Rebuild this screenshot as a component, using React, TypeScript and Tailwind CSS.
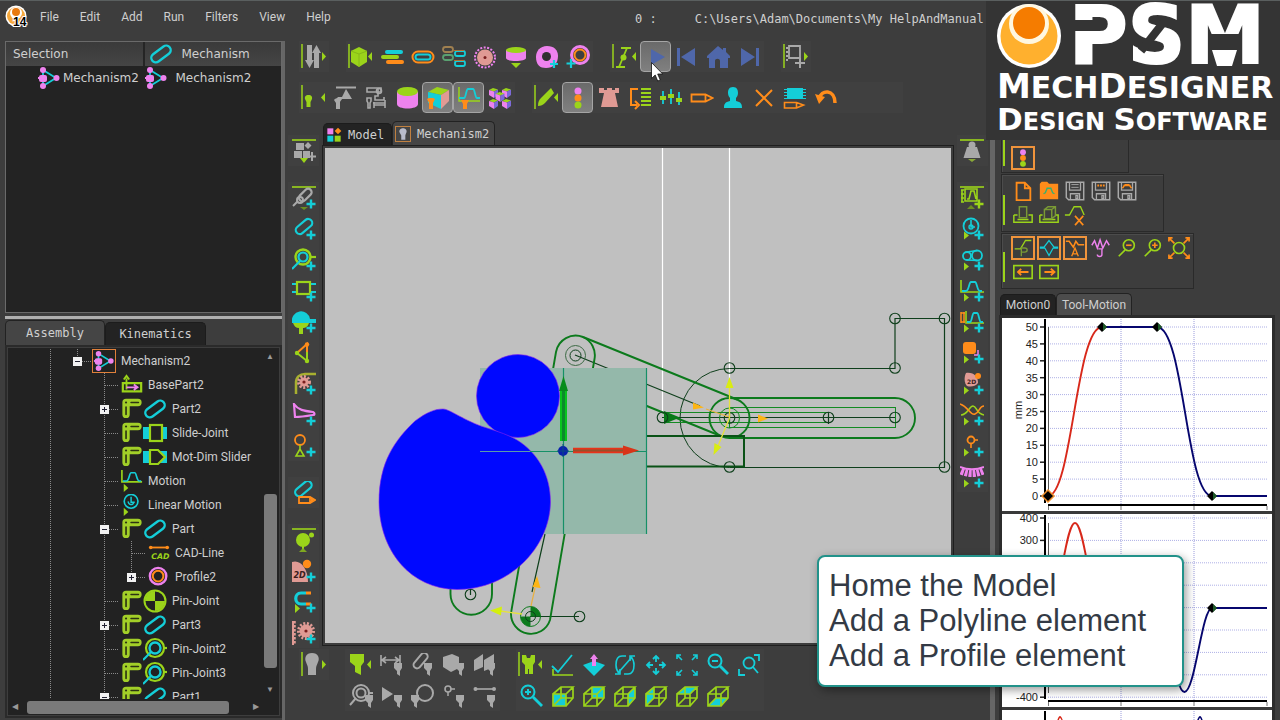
import type { ReactNode } from "react";

const L = "#9bd41a";
const C = "#14ced8";
const O = "#ff8c1a";
const V = "#ee82ee";
const S = "#e09a94";
const G = "#a9a9a9";
const B = "#4f67aa";

const plus = <path d="M19 13.5v9M14.5 18h9" stroke={C} strokeWidth="2.4" />;
const run = <path d="M4 14.5l5 4-5 4z" fill={L} />;
const funnel = (x: number, y: number, color: string) => (
  <path transform={`translate(${x} ${y})`} d="M0 0h8v5l-2 3v5l-3-2V8L0 5z" fill={color} />
);
const slot = (color: string) => (
  <rect x="2.5" y="5.5" width="19" height="8" rx="4" transform="rotate(-40 12 9.5)" stroke={color} strokeWidth="2.2" />
);
const cubeFrame = (face: ReactNode) => (
  <>
    {face}
    <path d="M2 10h13v12H2zM2 10l8-7h12l-7 7M22 3v11l-7 8M10 3v11h12M10 14l-8 8" stroke={L} strokeWidth="1.7" />
  </>
);
const floppy = (mark: ReactNode) => (
  <>
    <path d="M2.5 2.5h19v19H5l-2.500-2.500z" stroke={G} strokeWidth="1.6" />
    <path d="M6 3v8h12V3M7 21v-6h10v6M13 17h2v3h-2z" stroke={G} strokeWidth="1.4" />
    {mark}
  </>
);
const gear = (cx: number, cy: number, r: number) => (
  <>
    <circle cx={cx} cy={cy} r={r} stroke={S} strokeWidth="3" strokeDasharray="2 1.6" />
    <circle cx={cx} cy={cy} r={r - 1} fill={S} />
    <circle cx={cx} cy={cy} r="1.6" fill="#7a1f1f" />
  </>
);
const miniCube = (x: number, y: number) => (
  <g transform={`translate(${x} ${y})`}>
    <path d="M0 2l4-2 5 1.500-4 2z" fill={L} />
    <path d="M0 2l5 1.500V10L0 7z" fill={V} />
    <path d="M9 1.500L5 3.500V10l4-3z" fill="#7d6ad8" />
  </g>
);
const mech = (
  <>
    <path d="M6 4v16M6 4l13 8-13 8" stroke={C} strokeWidth="1.8" />
    <path d="M1 12h6" stroke={V} strokeWidth="2" />
    <circle cx="6" cy="4" r="3" fill={V} />
    <circle cx="6" cy="20" r="3" fill={V} />
    <rect x="2" y="9" width="8" height="7" rx="2" fill={V} />
    <circle cx="19.500" cy="12" r="3" fill={V} />
  </>
);
const motion = (
  <path d="M2 12h4c3 0 3-9 5-9h4c2 0 2 9 5 9h2" stroke={C} strokeWidth="1.8" />
);

const icons: Record<string, ReactNode> = {
  bars: (
    <g strokeWidth="4" strokeLinecap="round">
      <path d="M7 7h14" stroke={C} />
      <path d="M3 12h14" stroke={L} />
      <path d="M8 17h14" stroke={O} />
    </g>
  ),
  slotOutline: (
    <>
      <rect x="1.500" y="6.500" width="21" height="11" rx="5.500" stroke={O} strokeWidth="2" />
      <rect x="4.500" y="9.500" width="15" height="5" rx="2.500" stroke={C} strokeWidth="2" />
    </>
  ),
  slots: (
    <g strokeWidth="1.800">
      <rect x="1" y="2" width="10" height="5" rx="2.500" stroke="#a08050" />
      <rect x="13" y="6" width="10" height="5" rx="2" stroke={C} />
      <rect x="1" y="10" width="10" height="5" rx="2.500" stroke="#5aa070" />
      <rect x="13" y="16" width="10" height="5" rx="2" stroke={C} />
      <path d="M12 5.500h10M12 15.500h10" stroke="#b07030" strokeWidth="1" />
    </g>
  ),
  gear: (
    <>
      <circle cx="12" cy="12.500" r="10" stroke={V} strokeWidth="2" strokeDasharray="2 1.500" />
      <circle cx="12" cy="12.500" r="8" fill={S} />
      <circle cx="12" cy="12.500" r="1.500" fill="#7a1f1f" />
    </>
  ),
  extrude: (
    <>
      <path d="M2 5v8c0 4 20 4 20 0V5z" fill={V} />
      <ellipse cx="12" cy="5" rx="10" ry="3" fill={L} />
      <path d="M7 18h10l-5 5z" fill={L} />
    </>
  ),
  camAdd: (
    <>
      <path d="M12 1c7 0 11 4 11 10 0 8-5 12-12 12C5 23 1 20 1 12 1 6 5 1 12 1z" fill={V} />
      <circle cx="11.500" cy="11.500" r="4.500" fill="#303030" />
      <path d="M19 15v8M15 19h8" stroke={C} strokeWidth="2.200" />
    </>
  ),
  profileAdd: (
    <>
      <circle cx="14" cy="10" r="8.500" stroke={V} strokeWidth="3" />
      <circle cx="14" cy="10" r="5.500" stroke={O} strokeWidth="2" />
      <path d="M5 14v9M.5 18.500h9" stroke={C} strokeWidth="2.200" />
    </>
  ),
  play: <path d="M7 4l14 8-14 8z" fill={B} />,
  first: <path d="M2 3h3v18H2zM20 3v18L6 12z" fill={B} />,
  home: <path d="M12 1L1 11v2h2v10h6v-7c0-3 5-3 5 0v7h8V13h2v-2l-4-4V3h-3v2z" fill={B} />,
  last: <path d="M19 3h3v18h-3zM4 3v18l14-9z" fill={B} />,
  support: (
    <>
      <path d="M3 1.500h20" stroke={G} strokeWidth="2" />
      <path d="M13 3l6 10H8z" fill={G} />
      <path d="M1 14c1-2 3-1 4-3h4c1 2-1 3-2 5v7H3v-6z" fill={G} />
    </>
  ),
  linkage: (
    <g stroke={G} strokeWidth="1.600">
      <path d="M3 2h14v4H3zM14 2v8h-3v4h9v-3M9 17h12v-3M10 22v-6M21 22v-6M10 19h11" />
      <circle cx="15" cy="5" r="2.500" />
      <path d="M3 12h4v3l-1 2v5H4v-5l-1-2z" />
    </g>
  ),
  cylinder: (
    <>
      <path d="M2 6v12c0 6 21 6 21 0V6z" fill={V} />
      <ellipse cx="12.500" cy="5.500" rx="10.500" ry="4.500" fill={L} />
    </>
  ),
  cube: (
    <>
      <path d="M2 6l9-5 12 3-8 5z" fill={L} />
      <path d="M2 6l13 3v14L2 17z" fill={C} />
      <path d="M23 4l-8 5v14l8-8z" fill={S} />
      <path d="M1 13l2-1h4l2 1-2 4v6H3v-6z" fill={O} />
    </>
  ),
  motionBulb: (
    <>
      <path d="M2 1v14h21" stroke={L} strokeWidth="1.500" />
      <path d="M2 12h5c2 0 2-9 4-9h5c2 0 2 9 4 9h3" stroke={C} strokeWidth="1.800" />
      <path d="M4 14h8l-2 4v5H6v-5z" fill={O} />
    </>
  ),
  cubes: (
    <>
      {miniCube(1, 2)}
      {miniCube(14, 2)}
      {miniCube(7.5, 6)}
      {miniCube(1, 13)}
      {miniCube(14, 13)}
    </>
  ),
  lights: (
    <>
      <circle cx="12" cy="5" r="3.500" fill={V} />
      <circle cx="12" cy="12" r="3.500" fill={O} />
      <circle cx="12" cy="19" r="3.500" fill={L} />
    </>
  ),
  rook: <path d="M2 2h5v2h3V2h5v2h3V2h4v5h-4l3 14H4L7 7H2z" fill={S} />,
  order: (
    <>
      <path d="M10 3H3v16h6M7 15l4 4-4 4" stroke={O} strokeWidth="2" />
      <path d="M13 3h10M13 7h10M13 11h10M13 15h10M13 19h10" stroke={L} strokeWidth="2" />
    </>
  ),
  sliders: (
    <>
      <path d="M4 5v13M12 3v15M20 6v13" stroke={C} strokeWidth="1.800" />
      <path d="M1 10h6v4H1zM9 8h6v4H9zM17 12h6v4h-6z" fill={L} />
    </>
  ),
  pencil: <path d="M1.500 8.500h14l7 3.500-7 3.500h-14zM15.500 8.500v7" stroke={O} strokeWidth="1.800" />,
  person: <path d="M12 1c4 0 5 3 5 6 0 2-1 4-2 5v3c5 1 6 3 6 7H3c0-4 1-6 6-7v-3c-1-1-2-3-2-5 0-3 1-6 5-6z" fill={C} />,
  cross: <path d="M4 4l16 16M20 4L4 20" stroke={O} strokeWidth="2" />,
  chipPencil: (
    <>
      <rect x="4" y="2" width="16" height="11" fill={C} />
      <path d="M1 3.500h22M1 6.500h22M1 9.500h22M1 12.500h22" stroke={C} strokeWidth="1.200" />
      <path d="M1.500 16.500h12l7 2.500-7 3h-12zM13.500 16.500v5" stroke={O} strokeWidth="1.600" />
    </>
  ),
  undo: (
    <>
      <path d="M5 13C7 3 21 3 21 17" stroke={O} strokeWidth="3.500" />
      <path d="M1 8l10 3-6 7z" fill={O} />
    </>
  ),
  stripBlocks: (
    <>
      <path d="M0 1h24" stroke={L} strokeWidth="1.600" />
      <path d="M4 4h8v7H4zM2 12h8v7H2zM11 12h7v7h-7zM16 3l3.500 3.500L16 10l-3.500-3.500z" fill={G} />
      <path d="M20 13v9M16 17.500h8" stroke={G} strokeWidth="2" />
      <path d="M8 19h8l-4 5z" fill={L} />
    </>
  ),
  stripPart: (
    <>
      <path d="M0 1h24" stroke={L} strokeWidth="1.600" />
      <rect x="6" y="5" width="15" height="7" rx="3.500" transform="rotate(-45 14 9)" stroke={G} strokeWidth="2.200" />
      <circle cx="8" cy="14" r="3" stroke={G} strokeWidth="2" />
      <path d="M1 20l5-5" stroke={G} strokeWidth="2" />
      {plus}
      <path d="M8 21h8l-4 3z" fill="#6c8f20" />
    </>
  ),
  partAdd: (
    <>
      {slot(C)}
      {plus}
    </>
  ),
  pinAdd: (
    <>
      <circle cx="11" cy="9" r="7.500" stroke={L} strokeWidth="2.400" />
      <circle cx="11" cy="9" r="4.500" stroke={C} strokeWidth="2.200" />
      <path d="M0 21l8-8" stroke={C} strokeWidth="2.200" />
      <path d="M18 9h6" stroke={L} strokeWidth="2.200" />
      {plus}
    </>
  ),
  slideAdd: (
    <>
      <path d="M0 5h24M0 13h24" stroke={C} strokeWidth="2.200" />
      <rect x="5" y="3" width="13" height="12" fill="#3d3d3d" stroke={L} strokeWidth="2.200" />
      {plus}
    </>
  ),
  ballAdd: (
    <>
      <path d="M0 12a9 9 0 0118-3h6v4H0z" fill={C} />
      <path d="M1 13h16c-1 4-4 5-6 5v6H7v-6c-3 0-5-2-6-5z" fill={L} />
      {plus}
    </>
  ),
  triad: (
    <>
      <path d="M5 12L15 3v8" stroke={O} strokeWidth="2" />
      <path d="M5 12l10 8v-9" stroke={L} strokeWidth="2" />
      <circle cx="15" cy="3.500" r="2.200" fill={O} />
      <circle cx="5" cy="12" r="2.200" fill={L} />
      <circle cx="15" cy="20" r="2.200" fill={L} />
    </>
  ),
  beltAdd: (
    <>
      <path d="M4 22V11c0-6 4-9 9-9h11" stroke="#a8b030" strokeWidth="2.500" />
      {gear(12, 10, 5.5)}
      {plus}
    </>
  ),
  camCurve: (
    <>
      <path d="M2 1c4 6 10 7 19 8 2 1 2 3 0 3-6 1-13 2-18 2z" stroke={V} strokeWidth="2.200" />
      {plus}
    </>
  ),
  lollyAdd: (
    <>
      <circle cx="8" cy="6" r="5" stroke={O} strokeWidth="1.800" />
      <path d="M8 11v4M8 15l-4 7h8z" stroke={L} strokeWidth="1.600" />
      {plus}
    </>
  ),
  partEdit: (
    <>
      <rect x="2" y="4" width="19" height="8" rx="4" transform="rotate(-40 11 8)" stroke={C} strokeWidth="2.200" />
      <path d="M7 16h11l5 3-5 3H7zM18 16v6" stroke={O} strokeWidth="1.800" />
      <path d="M19 17l4 2-4 2z" fill={O} />
    </>
  ),
  stripBall: (
    <>
      <path d="M0 1h24" stroke={L} strokeWidth="1.600" />
      <circle cx="11" cy="12" r="7" fill={L} />
      <circle cx="19.500" cy="7" r="2.500" fill={L} />
      <path d="M11 18v3" stroke={L} strokeWidth="2" />
      <path d="M7 24l4-4 4 4z" fill="#7fa820" />
    </>
  ),
  camTwoD: (
    <>
      <path d="M0 23V3c8-3 16 6 16 20z" fill={S} />
      <circle cx="15" cy="5" r="4.200" fill={O} />
      <text x="1.500" y="19" fontSize="8" fontWeight="700" fontStyle="italic" fontFamily="DejaVu Sans, sans-serif" fill="#3a2020">2D</text>
      {plus}
    </>
  ),
  magnet: (
    <>
      <path d="M14 3H9C2 3 2 14 9 14h5" stroke={C} strokeWidth="3.200" />
      <path d="M14 3h5M14 14h5" stroke={O} strokeWidth="3.200" />
      <path d="M3 14l5 4.500L3 23z" fill={L} />
      {plus}
    </>
  ),
  rackAdd: (
    <>
      <path d="M2 0v24" stroke={S} strokeWidth="3.500" strokeDasharray="2.500 1.500" />
      <path d="M1 0v24" stroke={S} strokeWidth="2" />
      {gear(14, 10, 7.5)}
      {plus}
    </>
  ),
  weight: (
    <>
      <path d="M0 1h24" stroke={L} strokeWidth="1.600" />
      <circle cx="12" cy="6" r="3.500" fill={G} />
      <path d="M7 8h10l3.500 11h-17z" fill={G} />
      <path d="M8 20h8l-4 3z" fill="#8aa838" />
    </>
  ),
  stripMotion: (
    <>
      <path d="M0 1h24" stroke={L} strokeWidth="1.600" />
      <path d="M5 3h12v12H5zM7 13h2l2-8h3l2 8M2 4v12M1 4h3M1 8h3M1 12h3M1 16h3" stroke={L} strokeWidth="1.600" />
      <path d="M19 13.500v9M14.500 18h9" stroke={L} strokeWidth="2.400" />
      <path d="M7 23l4-4 4 4z" fill="#6c8f20" />
    </>
  ),
  clockAdd: (
    <>
      <circle cx="11" cy="9" r="7.500" stroke={C} strokeWidth="1.800" />
      <path d="M11 3v7h4" stroke={C} strokeWidth="1.600" />
      <circle cx="11" cy="10" r="2" stroke={C} strokeWidth="1.400" />
      {run}
      {plus}
    </>
  ),
  pulleyAdd: (
    <>
      <circle cx="7" cy="8" r="4" stroke={C} strokeWidth="1.800" />
      <circle cx="17" cy="7.500" r="5" stroke={C} strokeWidth="1.800" />
      <path d="M7 4l10-1.500M7 12l10 .5" stroke={C} strokeWidth="1.500" />
      {run}
      {plus}
    </>
  ),
  motionAdd: (
    <>
      <path d="M1 1v12h23" stroke={L} strokeWidth="1.600" />
      {motion}
      {run}
      {plus}
    </>
  ),
  motionFile: (
    <>
      <path d="M1 2v11M4 2v11M1 3h4M1 12h4" stroke={O} strokeWidth="1.500" />
      <path d="M6 1v12h18" stroke={L} strokeWidth="1.600" />
      <path d="M7 12h3c2 0 2-9 4-9h3c2 0 2 9 4 9h2" stroke={C} strokeWidth="1.800" />
      {run}
      {plus}
    </>
  ),
  blockAdd: (
    <>
      <rect x="3" y="1" width="13" height="12" rx="3" fill={O} />
      <path d="M18 9v5h-4" stroke={V} strokeWidth="1.500" />
      {run}
      {plus}
    </>
  ),
  camData: (
    <>
      <path d="M6 1c8-1 12 4 12 10-3 4-8 4-11 3-3-3-3-9-1-13z" fill={S} />
      <circle cx="18" cy="4" r="3" fill={O} />
      <text x="7" y="12" fontSize="6" fontWeight="700" fontFamily="DejaVu Sans, sans-serif" fill="#3a2020">2D</text>
      {run}
      {plus}
    </>
  ),
  curvesAdd: (
    <>
      <path d="M1 12c7 0 8-9 12-9s3 8 11 9" stroke={L} strokeWidth="1.600" />
      <path d="M0 1c9 3 10 12 15 10s4-8 9-8" stroke={O} strokeWidth="1.600" />
      {run}
      {plus}
    </>
  ),
  pinPoint: (
    <>
      <circle cx="11" cy="6" r="3.500" stroke={O} strokeWidth="1.800" />
      <path d="M14 6h4M11 9.500V14" stroke={O} strokeWidth="1.600" />
      {run}
      {plus}
    </>
  ),
  springAdd: (
    <>
      <path d="M0 2c8 3 16 3 24 0" stroke={V} strokeWidth="2" />
      <path d="M1 6c8 3.500 14 3.500 22 0" stroke={V} strokeWidth="7" strokeDasharray="3 1" />
      {run}
      {plus}
    </>
  ),
  dimFunnel: (
    <>
      <path d="M1 2v11M20 2v11M2 7h17M6 4L2 7l4 3M15 4l4 3-4 3" stroke={G} strokeWidth="1.600" />
      {funnel(14, 10, G)}
    </>
  ),
  partFunnel: (
    <>
      <rect x="1" y="4" width="18" height="7" rx="3.500" transform="rotate(-50 10 8)" stroke={G} strokeWidth="2" />
      {funnel(13, 10, G)}
    </>
  ),
  cubeFunnel: (
    <>
      <path d="M1 4l9-3 7 3v11l-8 4-8-5z" fill={G} />
      {funnel(14, 10, G)}
    </>
  ),
  planeFunnel: (
    <>
      <path d="M1 7l9-6v13l-9 4zM11 7l10-6v13l-10 4z" fill={G} />
      {funnel(14, 10, G)}
    </>
  ),
  pinFunnel: (
    <>
      <circle cx="12" cy="9" r="8" stroke={G} strokeWidth="2" />
      <circle cx="12" cy="9" r="4.500" stroke={G} strokeWidth="2" />
      <path d="M1 21l6-7M20 9h4" stroke={G} strokeWidth="2" />
      {funnel(16, 11, G)}
    </>
  ),
  runFunnel: (
    <>
      <path d="M2 3l11 7-11 7z" fill={G} />
      {funnel(14, 11, G)}
    </>
  ),
  circleFunnel: (
    <>
      <circle cx="14" cy="9" r="8" stroke={G} strokeWidth="2" />
      {funnel(0, 11, G)}
    </>
  ),
  pointFunnel: (
    <>
      <circle cx="6" cy="5" r="3" stroke={G} strokeWidth="1.600" />
      <path d="M9 5h4M6 8v4" stroke={G} strokeWidth="1.500" />
      {funnel(14, 11, G)}
    </>
  ),
  lineFunnel: (
    <>
      <path d="M2 5h20" stroke={G} strokeWidth="1.600" />
      <circle cx="2.500" cy="5" r="2" fill={G} />
      <circle cx="21" cy="5" r="2" fill={G} />
      {funnel(14, 11, G)}
    </>
  ),
  check: (
    <>
      <path d="M1 13l6 6L21 2" stroke={C} strokeWidth="1.800" />
      <path d="M2 16v6h20" stroke={L} strokeWidth="1.600" />
    </>
  ),
  planeUp: (
    <>
      <path d="M1 12l11-4 11 4-11 11z" fill={C} />
      <path d="M12 1l4 5h-2v7h-4V6H8z" fill={V} />
    </>
  ),
  rotate: (
    <>
      <path d="M13 3H9C4 3 3 7 3 12c0 3 1 6 3 8M2 21h5v-5M11 21h4c5 0 6-4 6-9 0-3-1-6-3-8M22 3h-5v5" stroke={C} strokeWidth="1.600" />
      <path d="M5 20L19 4" stroke={C} strokeWidth="1.600" />
    </>
  ),
  pan: (
    <path d="M12 3v6M12 15v6M3 12h6M15 12h6M9 6l3-3 3 3M9 18l3 3 3-3M6 9l-3 3 3 3M18 9l3 3-3 3" stroke={C} strokeWidth="1.800" />
  ),
  fit: (
    <path d="M2 6V2h4M18 2h4v4M22 18v4h-4M6 22H2v-4M2 2l5 5M22 2l-5 5M22 22l-5-5M2 22l5-5" stroke={C} strokeWidth="1.600" />
  ),
  zoomOut: (
    <>
      <circle cx="9" cy="8" r="6.500" stroke={C} strokeWidth="2" />
      <path d="M6 8h6" stroke={C} strokeWidth="2" />
      <path d="M14 13l8 8" stroke={C} strokeWidth="2.800" />
    </>
  ),
  zoomIn: (
    <>
      <circle cx="8" cy="8" r="6.500" stroke={C} strokeWidth="2" />
      <path d="M5 8h6M8 5v6" stroke={C} strokeWidth="2" />
      <path d="M13 13l9 9" stroke={C} strokeWidth="2.800" />
    </>
  ),
  zoomWin: (
    <>
      <circle cx="12" cy="10" r="5.500" stroke={C} strokeWidth="1.800" />
      <path d="M16 14l5 6M17 2h5v6M2 16v6h6" stroke={C} strokeWidth="1.800" />
    </>
  ),
  viewFront: cubeFrame(<path d="M2 10h13v12H2z" fill={C} />),
  viewBack: cubeFrame(<path d="M10 3h12v11H10z" fill={C} />),
  viewRight: cubeFrame(<path d="M22 3v11l-7 8V10z" fill={C} />),
  viewLeft: cubeFrame(<path d="M2 10l8-7v11l-8 8z" fill={C} />),
  viewTop: cubeFrame(<path d="M2 10l8-7h12l-7 7z" fill={C} />),
  viewBottom: cubeFrame(<path d="M2 22l8-8h12l-7 8z" fill={C} />),
  newFile: <path d="M5 3h9l6 6v13H5zM14 3v6h6" stroke={O} strokeWidth="2" />,
  openFile: (
    <>
      <path d="M2 4l2-2h6l2 2h10v17H2z" fill={O} />
      <path d="M6 15l2-1 2-5h4l2 5 2 1" stroke="#38b070" strokeWidth="1.500" />
    </>
  ),
  save: floppy(<path d="M8 5h8M8 8h8" stroke={G} />),
  saveDots: floppy(<path d="M8 6h8" stroke={O} strokeWidth="2" strokeDasharray="2 1" />),
  saveCurve: floppy(<path d="M7 9l3-4h4l3 4M8 6h8" stroke={O} strokeWidth="1.500" />),
  tray: (
    <>
      <path d="M2 12v8h20v-8h-4M2 12h4M6 17h12" stroke={L} strokeWidth="1.600" />
      <rect x="8" y="3" width="8" height="12" stroke="#7a9a35" strokeWidth="1.600" />
    </>
  ),
  trayCopy: (
    <>
      <path d="M2 12v8h20v-8h-3M2 12h3M5 17h14" stroke={L} strokeWidth="1.600" />
      <path d="M7 6h8v10H7zM7 6l4-3h8v10l-4 3M15 6l4-3" stroke="#7a9a35" strokeWidth="1.600" />
    </>
  ),
  curveDelete: (
    <>
      <path d="M1 12h5l5-9h7l4 9" stroke={L} strokeWidth="1.500" />
      <path d="M12 13l9 10M21 13l-9 10" stroke={O} strokeWidth="1.800" />
    </>
  ),
  curveP: (
    <>
      <path d="M2 13h7l6-10h7" stroke={L} strokeWidth="1.600" />
      <path d="M10 22V12h4c4 0 4 5 0 5h-4" stroke="#7a9a35" strokeWidth="1.600" />
    </>
  ),
  curveV: <path d="M1 11h5l6-8 6 8h5M1 12h6l5 9 5-9h6" stroke={C} strokeWidth="1.500" />,
  curveA: (
    <>
      <path d="M1 4h4l5 7 3-7 3 4h7" stroke={O} strokeWidth="1.800" />
      <path d="M8 22l4-10 4 10M10 19h4" stroke={O} strokeWidth="1.600" />
    </>
  ),
  curveJ: (
    <>
      <path d="M2 9l3-5 3 8 3-9 3 9 4-8 3 5" stroke={V} strokeWidth="1.600" />
      <path d="M9 13h4v6c0 3-5 3-5 0" stroke={V} strokeWidth="1.500" />
    </>
  ),
  graphOut: (
    <>
      <circle cx="14" cy="9" r="6" stroke={L} strokeWidth="1.800" />
      <path d="M10 14l-7 7" stroke={L} strokeWidth="1.800" />
      <path d="M11 9h6" stroke={O} strokeWidth="1.800" />
    </>
  ),
  graphIn: (
    <>
      <circle cx="14" cy="9" r="6" stroke={L} strokeWidth="1.800" />
      <path d="M10 14l-7 7" stroke={L} strokeWidth="1.800" />
      <path d="M11 9h6M14 6v6" stroke={O} strokeWidth="1.800" />
    </>
  ),
  graphFit: (
    <>
      <circle cx="12" cy="12" r="6" stroke={L} strokeWidth="1.800" />
      <path d="M7 7L2 2M17 7l5-5M7 17l-5 5M17 17l5 5M1 5V1h4M19 1h4v4M1 19v4h4M19 23h4v-4" stroke={O} strokeWidth="1.800" />
    </>
  ),
  prev: (
    <>
      <rect x="2" y="5" width="20" height="14" stroke={L} strokeWidth="1.800" />
      <path d="M18 12H7M10 8.500L6.500 12l3.500 3.500" stroke={O} strokeWidth="2" />
    </>
  ),
  next: (
    <>
      <rect x="2" y="5" width="20" height="14" stroke={L} strokeWidth="1.800" />
      <path d="M7 12h11M14 8.500l4 3.500-4 3.500" stroke={O} strokeWidth="2" />
    </>
  ),
  mechanism: mech,
  part: <rect x="1" y="7.500" width="22" height="9" rx="4.500" transform="rotate(-37 12 12)" stroke={C} strokeWidth="2.400" />,
  basePart: (
    <>
      <path d="M2 10h20v9H2z" stroke={L} strokeWidth="2.400" />
      <path d="M6 17V5M3 6l3-4 3 4" stroke={L} strokeWidth="2" />
      <path d="M6 14.500h11M14 11.500l4 3-4 3" stroke={V} strokeWidth="2" />
    </>
  ),
  bracket: (
    <>
      <path d="M5.500 19V6H18.500" stroke="#a2cf28" strokeWidth="8" strokeLinecap="round" strokeLinejoin="round" />
      <path d="M5.500 19v-8M11 6h8" stroke="#2c3312" strokeWidth="1.800" strokeLinecap="round" />
      <circle cx="5.500" cy="6" r="1.200" fill="#2c3312" />
    </>
  ),
  slideJoint: (
    <>
      <path d="M0 6h24v12H0z" fill={C} />
      <rect x="7" y="4" width="12" height="16" fill="#222" stroke={L} strokeWidth="2.200" />
    </>
  ),
  dimJoint: (
    <>
      <path d="M0 6h24v12H0z" fill={C} />
      <path d="M7 5h8l7 7-7 7H7z" fill="#222" stroke={L} strokeWidth="2.200" />
    </>
  ),
  motion: (
    <>
      <path d="M1 0v13h22" stroke={L} strokeWidth="1.800" />
      {motion}
      <path d="M3 15l5 4.500-5 4.500z" fill={L} />
    </>
  ),
  clock: (
    <>
      <circle cx="11" cy="8" r="7.500" stroke={C} strokeWidth="1.800" />
      <path d="M11 3v6h4M8 8a3 3 0 006 1" stroke={C} strokeWidth="1.600" />
      <path d="M3 15l5 4.500-5 4.500z" fill={L} />
    </>
  ),
  cadLine: (
    <>
      <path d="M2 6h19" stroke={O} strokeWidth="2" />
      <circle cx="3" cy="6" r="2" fill={O} />
      <circle cx="21" cy="6" r="2" fill={O} />
      <text x="3.500" y="18.500" fontSize="8.500" fontWeight="700" fontStyle="italic" fontFamily="DejaVu Sans, sans-serif" fill={L}>CAD</text>
    </>
  ),
  profile: (
    <>
      <circle cx="11" cy="11" r="9" stroke={V} strokeWidth="2.600" />
      <circle cx="11" cy="11" r="5.800" stroke={O} strokeWidth="2.200" />
    </>
  ),
  pinFilled: (
    <>
      <circle cx="12" cy="12" r="10.500" fill="#222" stroke={L} strokeWidth="2" />
      <path d="M12 12V2A10 10 0 002 12zM12 12v10a10 10 0 0010-10z" fill={L} />
    </>
  ),
  pinJoint: (
    <>
      <circle cx="12" cy="11" r="9" stroke={L} strokeWidth="2.200" />
      <circle cx="12" cy="11" r="5.500" stroke={C} strokeWidth="2.400" />
      <path d="M0 23l8-8" stroke={C} strokeWidth="2.200" />
      <path d="M21 11h3" stroke={L} strokeWidth="2.200" />
    </>
  ),
  modelTab: (
    <>
      <path d="M2 2h9v9H2z" fill={V} />
      <path d="M2 13h9v9H2z" fill={C} />
      <path d="M13 13h9v9h-9z" fill={L} />
      <path d="M18 1l5 5-5 5-5-5z" fill={O} />
    </>
  ),
  bulbTab: <path d="M12 2c5 0 7 4 6 7-1 3-2 4-2 6v7H9v-7c0-2-2-3-3-6-1-3 1-7 6-7z" fill="#b9bccb" />,
};

function Icon({ name, className = "size-6" }: { name: string; className?: string }) {
  return (
    <svg viewBox="0 0 24 24" fill="none" aria-hidden="true" className={`shrink-0 ${className}`}>
      {icons[name]}
    </svg>
  );
}

function Tool({ name, active = false }: { name: string; active?: boolean }) {
  return (
    <button
      type="button"
      aria-label={name}
      aria-pressed={active}
      className={
        active
          ? "flex size-[31px] items-center justify-center rounded-[4px] border border-[#a5a5a5] bg-linear-to-b from-[#6a6a6a] to-[#808080]"
          : "flex size-[31px] items-center justify-center"
      }
    >
      <Icon name={name} />
    </button>
  );
}

function Handle({ label, dir, children }: { label: string; dir: "left" | "right"; children: ReactNode }) {
  return (
    <button type="button" aria-label={label} className="h-[31px] w-[30px]">
      <svg viewBox="0 0 30 31" fill="none" aria-hidden="true" className="h-[31px] w-[30px]">
        <path d="M3 3v24" stroke={L} strokeWidth="1.500" />
        {children}
        <path d={dir === "right" ? "M23 11v9l4-4.500z" : "M26 11v9l-4-4.500z"} fill={L} />
      </svg>
    </button>
  );
}

const group = "flex bg-[#404040]";

function Toolbars() {
  return (
    <div className="flex flex-col gap-[10px] pl-[14px]">
      <div className="flex gap-[17px]">
        <div className={group}>
          <Handle label="Show toolbars" dir="right">
            <path d="M8 4h5v15h2l-4.500 8L6 19h2zM15 27V12h-2l4.500-8 4.500 8h-2v15z" fill={G} />
          </Handle>
        </div>
        <div className={group}>
          <Handle label="Solids" dir="left">
            <path d="M5 10l8-4 8 4v11l-8 5-8-5z" fill={L} />
            <path d="M5 10l8 3 8-3M13 13v13" stroke="#86b818" />
          </Handle>
          {["bars", "slotOutline", "slots", "gear", "extrude", "camAdd", "profileAdd"].map((n) => (
            <Tool key={n} name={n} />
          ))}
        </div>
        <div className={group}>
          <Handle label="Cycle" dir="left">
            <path d="M6 26h9M11 7h10M9 26l8-19" stroke={L} strokeWidth="1.800" />
            <circle cx="13.500" cy="16.500" r="3" fill={L} />
          </Handle>
          <Tool name="play" active />
          <Tool name="first" />
          <Tool name="home" />
          <Tool name="last" />
        </div>
        <div className={group}>
          <Handle label="Add element" dir="right">
            <path d="M8 5h11v12H8z" stroke={G} strokeWidth="1.800" />
            <path d="M6 6v14" stroke={G} strokeWidth="2" strokeDasharray="2 2" />
            <path d="M19 17v10M14 22h10" stroke={G} strokeWidth="2" />
          </Handle>
        </div>
      </div>
      <div className="flex gap-[17px]">
        <div className={group}>
          <Handle label="Filters" dir="left">
            <path d="M9.500 13c3 0 4 2 3.500 4l-1.500 3v5h-4v-5L6 17c-.5-2 .5-4 3.500-4z" fill={L} />
          </Handle>
          <Tool name="support" />
          <Tool name="linkage" />
          <Tool name="cylinder" />
          <Tool name="cube" active />
          <Tool name="motionBulb" active />
          <Tool name="cubes" />
        </div>
        <div className={`${group} pr-[62px]`}>
          <Handle label="Edit" dir="left">
            <path d="M6 24c0-4 1-6 3-8l10-10 3 5-9 10c-2 2-4 3-7 3z" fill={L} />
          </Handle>
          <Tool name="lights" active />
          {["rook", "order", "sliders", "pencil", "person", "cross", "chipPencil", "undo"].map((n) => (
            <Tool key={n} name={n} />
          ))}
        </div>
      </div>
    </div>
  );
}

function Strip({ groups }: { groups: string[][] }) {
  return (
    <div className="flex shrink-0 flex-col items-center gap-4 pt-[22px]">
      {groups.map((g) => (
        <div key={g[0]} className="flex flex-col bg-[#404040]">
          {g.map((n) => (
            <Tool key={n} name={n} />
          ))}
        </div>
      ))}
    </div>
  );
}

const leftStrip = [
  ["stripBlocks"],
  ["stripPart", "partAdd", "pinAdd", "slideAdd", "ballAdd", "triad", "beltAdd", "camCurve", "lollyAdd"],
  ["partEdit"],
  ["stripBall", "camTwoD", "magnet", "rackAdd"],
];
const rightStrip = [
  ["weight"],
  ["stripMotion", "clockAdd", "pulleyAdd", "motionAdd", "motionFile", "blockAdd", "camData", "curvesAdd", "pinPoint", "springAdd"],
];

const nodes = [
  [895, 318.5], [944.5, 318.5], [895, 368], [729.5, 368], [729.5, 467], [944.5, 467],
  [828.5, 417.5], [895, 417.5], [662.5, 417.5], [729.5, 418], [579.5, 616.5], [470.5, 594.5],
];

function ModelView() {
  return (
    <svg
      viewBox="325 148 626 495"
      preserveAspectRatio="xMidYMid slice"
      fill="none"
      role="img"
      aria-label="Mechanism"
      className="block size-full bg-[#c0c0c0]"
    >
      <path d="M662.500 148V412M729.500 148V380" stroke="#fff" strokeWidth="1.200" />
      <g stroke="#0f3f1c" strokeWidth="1.200">
        <path d="M729.500 368.500H895V318.500H944.500V467.500H729.500" />
        <path d="M729.500 368.500A49.500 49.500 0 00680 418A49.500 49.500 0 00729.500 467.500" strokeWidth="1" />
        <path d="M662 417.500H895M530 616.500H579M575 355L700 406M545 534L532 592" />
        <path d="M729.500 412v12M828.500 412v12M470.500 589v6" />
      </g>
      <g stroke="#138a22" strokeWidth="1">
        <path d="M662 412.500H828.500M662 422.500H828.500" />
        <rect x="729.500" y="407.500" width="166" height="20" />
      </g>
      <g stroke="#0c7a1c" strokeWidth="1.900">
        <path d="M729.500 398H895a20 20 0 010 40H729.500" />
        <circle cx="729.500" cy="418" r="20" />
        <path d="M583 337L737 399.500M568 374L722 436.500" />
        <path d="M583 337A20 20 0 00556 352L511 613A20 20 0 00550 620L594.500 359A20 20 0 00583 337" />
        <path d="M450.500 570v24a20 20 0 0041.500 0v-24" />
      </g>
      <path d="M640 436H744V466.500H640" stroke="#0a5216" strokeWidth="2" />
      <path d="M664 411L680 417.500L664 424z" fill="#087a18" />
      <circle cx="530.500" cy="616.500" r="10" stroke="#0c7a1c" />
      <path d="M530.500 616.500V606.500A10 10 0 01540.500 616.500zM530.500 616.500V626.500A10 10 0 01520.500 616.500z" fill="#0c7a1c" />
      <circle cx="530.500" cy="616.500" r="5" stroke="#0f3f1c" />
      <circle cx="729.500" cy="418" r="10" stroke="#138a22" />
      <circle cx="575.500" cy="355.500" r="10" stroke="#3d6b45" />
      <circle cx="575.500" cy="355.500" r="5.500" stroke="#0f3f1c" />
      <g stroke="#0f3f1c" strokeWidth="1.100">
        {nodes.map(([x, y]) => (
          <circle key={`${x}-${y}`} cx={x} cy={y} r="5.300" />
        ))}
      </g>
      <path d="M729.500 418V386M729.500 418L718 446" stroke="#e6e23a" strokeWidth="1.300" />
      <path d="M729.500 377l4 11h-8zM713.500 455l1-12 7 4z" fill="#d9ec12" />
      <path d="M729 417L706 409M531 606L535 588" stroke="#e8b040" strokeWidth="1.200" />
      <path d="M704 407.500l-11-5v7zM768 418.500l-10-4v8zM537 576l3.500 12-8-1z" fill="#fdb515" />
      <path d="M522 614L500 611" stroke="#e6e23a" strokeWidth="1.300" />
      <path d="M490 610.500l12-4-1 9z" fill="#d4f00c" />

      <rect x="480" y="368" width="167" height="166" fill="#94b8aa" />
      <path d="M646.500 368V534M563.500 368V534" stroke="#169068" strokeWidth="1.200" />
      <circle cx="518" cy="396" r="41.500" fill="#0008ff" stroke="#8a20f0" strokeWidth=".6" />
      <path
        d="M443 409C450 409 464 421 487 428C499 432 509 435 517 440C538 453 550.500 475 550.500 502C550 547 510 589.500 457 589.500C409 589 379 549 379 502C379 462 395 440 415 421C427 412 435 409 443 409Z"
        fill="#0008ff"
        stroke="#8a20f0"
        strokeWidth=".6"
      />
      <path d="M480 451.500H530" stroke="#5c9ca8" />
      <path d="M530 451.500H647" stroke="#169068" strokeWidth="1.200" />
      <path d="M563.500 388V441" stroke="#08c41e" strokeWidth="7" />
      <path d="M563.500 388V441" stroke="#0b8a2c" strokeWidth="3" />
      <path d="M563.500 376l4.500 15h-9z" fill="#078c1c" />
      <path d="M573 450.500H625" stroke="#e8321a" strokeWidth="5.500" />
      <path d="M573 450.500H625" stroke="#96502a" strokeWidth="2" />
      <path d="M639 450.500l-16 5v-10z" fill="#d83418" />
      <circle cx="563" cy="451" r="5" fill="#0a1fae" />
      <path d="M563 444v13M557 451h12" stroke="#0a4a80" />
    </svg>
  );
}

type Row = { guides: string[]; icons: string[]; label: string; boxed?: boolean };
const rows: Row[] = [
  { guides: ["v", "end-"], icons: ["mechanism"], label: "Mechanism2", boxed: true },
  { guides: ["v", "", "vh"], icons: ["basePart"], label: "BasePart2" },
  { guides: ["v", "", "vh+"], icons: ["bracket", "part"], label: "Part2" },
  { guides: ["v", "", "vh"], icons: ["bracket", "slideJoint"], label: "Slide-Joint" },
  { guides: ["v", "", "vh"], icons: ["bracket", "dimJoint"], label: "Mot-Dim Slider" },
  { guides: ["v", "", "vh"], icons: ["motion"], label: "Motion" },
  { guides: ["v", "", "vh"], icons: ["clock"], label: "Linear Motion" },
  { guides: ["v", "", "vh-"], icons: ["bracket", "part"], label: "Part" },
  { guides: ["v", "", "v", "vh"], icons: ["cadLine"], label: "CAD-Line" },
  { guides: ["v", "", "v", "end+"], icons: ["profile"], label: "Profile2" },
  { guides: ["v", "", "vh"], icons: ["bracket", "pinFilled"], label: "Pin-Joint" },
  { guides: ["v", "", "vh+"], icons: ["bracket", "part"], label: "Part3" },
  { guides: ["v", "", "vh"], icons: ["bracket", "pinJoint"], label: "Pin-Joint2" },
  { guides: ["v", "", "vh"], icons: ["bracket", "pinJoint"], label: "Pin-Joint3" },
  { guides: ["v", "", "vh-"], icons: ["bracket", "part"], label: "Part1" },
];

function Guide({ kind }: { kind: string }) {
  const end = kind.startsWith("end");
  const box = kind.endsWith("+") || kind.endsWith("-");
  return (
    <svg viewBox="0 0 27 24" fill="none" aria-hidden="true" className="h-6 w-[27px] shrink-0">
      {kind !== "" && <path d={end ? "M13.500 0v12" : "M13.500 0v24"} stroke="#8a8a8a" strokeDasharray="1 1" />}
      {(end || kind.includes("h")) && <path d="M14 12.500h13" stroke="#8a8a8a" strokeDasharray="1 1" />}
      {box && <rect x="9" y="8" width="9" height="9" fill="#f2f2f2" />}
      {box && <path d={kind.endsWith("+") ? "M11 12.500h5M13.500 10v5" : "M11 12.500h5"} stroke="#223" />}
    </svg>
  );
}

function AssemblyTree() {
  return (
    <ul className="min-h-0 flex-1 overflow-hidden pl-[29px] pt-px text-[12px] text-[#cfcfcf]">
      {rows.map((row) => (
        <li key={row.label} className="flex h-6 items-center">
          {row.guides.map((g, i) => (
            <Guide key={i} kind={g} />
          ))}
          <span className={row.boxed ? "ml-px mr-[5px] flex size-6 items-center border border-[#e0803a]" : "ml-[3px] mr-[5px] flex"}>
            {row.icons.map((n, i) => (
              <Icon key={n} name={n} className={i === 0 ? "size-[22px]" : "size-6"} />
            ))}
          </span>
          <span className="whitespace-nowrap">{row.label}</span>
        </li>
      ))}
    </ul>
  );
}

const tabOn = "flex items-center rounded-t-[5px] border border-b-0 border-[#222] bg-[#454545] text-[12px] text-[#cfcfcf]";
const tabOff = "mt-[2px] flex items-center rounded-t-[5px] border border-b-0 border-[#1c1c1c] bg-[#232323] text-[12px] text-[#cfcfcf]";
const mono = "[font-family:'DejaVu_Sans_Mono',monospace]";
const ui = "[font-family:Roboto,sans-serif]";

function LeftColumn() {
  return (
    <aside className="flex w-[285px] shrink-0 flex-col border-r-[3px] border-[#666] pb-[2px] pl-[5px]">
      <section className="h-[272px] shrink-0 border border-[#6a6a6a] bg-[#232323] [font-family:'DejaVu_Sans',sans-serif]">
        <table className="w-full table-fixed border-collapse text-[12px] text-[#cfcfcf]">
          <thead>
            <tr className="h-6 bg-linear-to-b from-[#3a3a3a] to-[#454545]">
              <th className="w-1/2 border-r-2 border-[#252525] p-0 pl-[7px] text-left font-normal">Selection</th>
              <th className="p-0 text-left font-normal">
                <span className="flex items-center gap-[9px] pl-1">
                  <Icon name="part" />
                  Mechanism
                </span>
              </th>
            </tr>
          </thead>
          <tbody>
            <tr className="h-6">
              <td className="p-0">
                <span className="flex items-center gap-[2px] pl-[31px]">
                  <Icon name="mechanism" />
                  Mechanism2
                </span>
              </td>
              <td className="p-0">
                <span className="flex items-center gap-2">
                  <Icon name="mechanism" />
                  Mechanism2
                </span>
              </td>
            </tr>
          </tbody>
        </table>
      </section>
      <div className="mt-[3px] h-[3px] shrink-0 bg-[#b0b0b0]" />
      <div role="tablist" className="flex h-[26px] shrink-0 pt-px">
        <button type="button" role="tab" aria-selected="true" className={`${tabOn} ${mono} w-[100px] justify-center`}>
          Assembly
        </button>
        <button type="button" role="tab" aria-selected="false" className={`${tabOff} ${mono} w-[101px] justify-center`}>
          Kinematics
        </button>
      </div>
      <div className="flex min-h-0 flex-1 flex-col border-2 border-[#2a2a2a] p-px">
        <div className={`flex min-h-0 flex-1 flex-col bg-[#222] ${ui}`}>
          <div className="flex min-h-0 flex-1">
            <AssemblyTree />
            <div className="flex w-[18px] shrink-0 flex-col items-center py-1 text-[8px] leading-[10px] text-[#999]">
              <span>▲</span>
              <span className="mt-auto h-[174px] w-[13px] rounded-[3px] bg-[#7a7a7a]" />
              <span className="mt-[17px]">▼</span>
            </div>
          </div>
          <div className="flex h-4 shrink-0 items-center pr-5 text-[8px] text-[#999]">
            <span className="w-[19px] pl-1">◀</span>
            <span className="h-[13px] w-[202px] rounded-[3px] bg-[#7a7a7a]" />
            <span className="ml-auto">▶</span>
          </div>
        </div>
      </div>
    </aside>
  );
}

function BottomBars() {
  return (
    <div className="flex h-[71px] shrink-0 items-start gap-4 pl-[14px]">
      <div className={group}>
        <Handle label="Selection filters" dir="right">
          <path d="M13 4c6 0 8 5 6 9-1 3-2 4-2 7v6H9v-6c0-3-1-4-2-7-2-4 0-9 6-9z" fill={G} />
        </Handle>
      </div>
      <div className="grid grid-cols-[repeat(5,31px)] bg-[#404040]">
        <Handle label="Element filters" dir="left">
          <rect x="0" y="0" width="5" height="31" fill="#404040" />
          <path d="M5 5h14v8l-3 4v9l-6-3v-6l-5-4z" fill={L} />
        </Handle>
        {["dimFunnel", "partFunnel", "cubeFunnel", "planeFunnel", "pinFunnel", "runFunnel", "circleFunnel", "pointFunnel", "lineFunnel"].map((n) => (
          <Tool key={n} name={n} />
        ))}
      </div>
      <div className="grid grid-cols-[repeat(8,31px)] bg-[#404040]">
        <Handle label="View" dir="left">
          <path d="M6 6h4l1 3h3l1-3h4v7l-2 3v9h-4v-5h-1v5H9v-9l-3-3z" fill={L} />
        </Handle>
        {["check", "planeUp", "rotate", "pan", "fit", "zoomOut", "zoomWin", "zoomIn", "viewFront", "viewBack", "viewRight", "viewLeft", "viewTop", "viewBottom"].map((n) => (
          <Tool key={n} name={n} />
        ))}
      </div>
    </div>
  );
}

function Centre() {
  return (
    <main className="flex min-w-0 flex-1 flex-col">
      <Toolbars />
      <div className="flex min-h-0 flex-1">
        <div className="w-[37px] shrink-0">
          <Strip groups={leftStrip} />
        </div>
        <div className="flex min-w-0 flex-1 flex-col pb-[3px]">
          <div role="tablist" className="flex h-8 shrink-0 pl-px pt-2">
            <button type="button" role="tab" aria-selected="false" className={`${tabOff} ${mono} w-[69px] gap-[6px] pl-[2px]`}>
              <Icon name="modelTab" className="size-4" />
              Model
            </button>
            <button type="button" role="tab" aria-selected="true" className={`${tabOn} ${mono} w-[103px] gap-[6px] pl-[2px]`}>
              <span className="border border-[#c08040]">
                <Icon name="bulbTab" className="size-[14px]" />
              </span>
              Mechanism2
            </button>
          </div>
          <div className="min-h-0 flex-1 border border-[#1f1f1f] p-[2px]">
            <ModelView />
          </div>
        </div>
        <div className="w-9 shrink-0">
          <Strip groups={rightStrip} />
        </div>
      </div>
      <BottomBars />
    </main>
  );
}

function Small({ name, boxed = false }: { name: string; boxed?: boolean }) {
  return (
    <button
      type="button"
      aria-label={name}
      className={
        boxed
          ? "mr-[2px] flex size-6 items-center justify-center border-2 border-[#f0943c]"
          : "mr-[2px] flex size-6 items-center justify-center"
      }
    >
      <Icon name={name} className={boxed ? "size-5" : "size-[22px]"} />
    </button>
  );
}

const palette = "flex border border-[#2a2a2a] pl-px shadow-[inset_1px_1px_0_#4c4c4c]";

const chartFont = { fontFamily: "'Liberation Sans', sans-serif", fontSize: 11, fill: "#222" };

function Frame({ y0, y1, ticks }: { y0: number; y1: number; ticks: { y: number; label?: string }[] }) {
  return (
    <>
      {ticks.map((t) => (
        <g key={t.y}>
          <path d={`M46 ${t.y}H265`} stroke="#aeb0e6" strokeDasharray="1 1" />
          {t.label !== undefined && (
            <>
              <path d={`M38 ${t.y}h5`} stroke="#222" strokeWidth="1.500" />
              <text x="36" y={t.y + 4} textAnchor="end" {...chartFont}>{t.label}</text>
            </>
          )}
        </g>
      ))}
      <path d={`M119 ${y0}V${y1}M192 ${y0}V${y1}`} stroke="#9a9cdc" strokeDasharray="1 1" />
      <path d={`M46.500 ${y0 + 8}V${y1 - 8}`} stroke="#555" />
      <path d={`M43 ${y0}V${y1 - 2}M46 ${y1}H265`} stroke="#000" strokeWidth="2" />
      <path d={`M46.500 ${y1 + 1}v4M119 ${y1 + 1}v4M192 ${y1 + 1}v4M265 ${y1 + 1}v4`} stroke="#777" />
    </>
  );
}

function Key({ x, y, start = false }: { x: number; y: number; start?: boolean }) {
  const r = start ? 6 : 5;
  return (
    <>
      <path d={`M${x} ${y - r}l${r} ${r}l-${r} ${r}l-${r}-${r}z`} fill="#000" stroke={start ? "#f0902c" : "none"} strokeWidth="1.500" />
      {!start && <path d={`M${x + 1} ${y - 4}l4 4l-4 4z`} fill="#1c5a28" />}
    </>
  );
}

const velocityLabels: Record<number, string> = { 0: "400", 1: "300", 8: "-400" };

function Charts() {
  const pos = Array.from({ length: 11 }, (_, i) => ({ y: 9 + i * 16.9, label: String(50 - i * 5) }));
  const vel = Array.from({ length: 9 }, (_, i) => ({ y: 4 + i * 22.4, label: velocityLabels[i] }));
  return (
    <div className="mr-[5px] flex min-h-0 flex-1 flex-col gap-[3px] overflow-hidden border-[3px] border-b-0 border-[#2c2c2c] bg-[#3a3a3a]">
      <svg viewBox="0 0 270 193" fill="none" className="block w-full shrink-0 bg-white">
        <Frame y0={1} y1={187} ticks={pos} />
        <text x="20" y="92" transform="rotate(-90 20 92)" textAnchor="middle" {...chartFont}>mm</text>
        <path d="M46 178C70 178 74 9 100 9" stroke="#d8281a" strokeWidth="1.900" />
        <path d="M100 9H155C182 9 184 178 210 178H265" stroke="#06066e" strokeWidth="1.900" />
        <Key x={46} y={178} start />
        <Key x={100} y={9} />
        <Key x={155} y={9} />
        <Key x={210} y={178} />
      </svg>
      <svg viewBox="0 0 270 193" fill="none" className="block w-full shrink-0 bg-white">
        <Frame y0={1} y1={187} ticks={vel} />
        <path d="M46 94C58 94 63 9 73 9S88 94 100 94" stroke="#d8281a" strokeWidth="1.900" />
        <path d="M100 94H155C166 94 172 178 182.500 178S200 94 210 94H265" stroke="#06066e" strokeWidth="1.900" />
        <Key x={210} y={94} />
      </svg>
      <svg viewBox="0 0 270 193" fill="none" className="block w-full shrink-0 bg-white">
        <path d="M43 1V187" stroke="#000" strokeWidth="2" />
        <path d="M46 94C50 50 54 7 58 7S68 50 73 94" stroke="#d8281a" strokeWidth="1.900" />
        <path d="M182 94C188 50 194 7 198 7S206 50 210 94" stroke="#06066e" strokeWidth="1.900" />
        <path d="M119 1V187M192 1V187" stroke="#9a9cdc" strokeDasharray="1 1" />
      </svg>
    </div>
  );
}

function RightColumn() {
  return (
    <aside className="flex w-[290px] shrink-0 flex-col items-stretch border-l-[5px] border-[#666] pl-1 pt-[66px]">
      <div className="ml-[2px] flex flex-col items-start gap-px">
        <div className={`${palette} h-[66px] w-[128px] items-end pb-[2px]`}>
          <span className="mb-1 mr-[6px] h-[58px] w-[2px] bg-[#9bd41a]" />
          <Small name="lights" boxed />
        </div>
        <div className={`${palette} h-[58px] items-end pb-1 pr-[22px]`}>
          <span className="mb-[2px] mr-[6px] h-[30px] w-[2px] bg-[#9bd41a]" />
          <div className="grid grid-cols-5">
            {["newFile", "openFile", "save", "saveDots", "saveCurve", "tray", "trayCopy", "curveDelete"].map((n) => (
              <Small key={n} name={n} />
            ))}
          </div>
        </div>
        <div className={`${palette} h-[56px] items-end pb-1`}>
          <span className="mb-[2px] mr-[6px] h-[30px] w-[2px] bg-[#9bd41a]" />
          <div className="grid grid-cols-7">
            {["curveP", "curveV", "curveA", "curveJ", "graphOut", "graphIn", "graphFit", "prev", "next"].map((n, i) => (
              <Small key={n} name={n} boxed={i < 3} />
            ))}
          </div>
        </div>
      </div>
      <div role="tablist" className={`mt-1 flex h-[22px] shrink-0 pl-px ${ui}`}>
        <button type="button" role="tab" aria-selected="false" className="mt-px w-[56px] rounded-t-[5px] border border-b-0 border-[#1c1c1c] bg-[#232323] text-[12px] leading-5 text-[#cfcfcf]">
          Motion0
        </button>
        <button type="button" role="tab" aria-selected="true" className="w-[76px] rounded-t-[5px] border border-b-0 border-[#222] bg-[#4c4c4c] text-[12px] leading-5 text-[#cfcfcf]">
          Tool-Motion
        </button>
      </div>
      <Charts />
    </aside>
  );
}

function Brand() {
  return (
    <div className="absolute right-0 top-0 flex h-[139px] w-[294px] flex-col bg-[#343434] pl-[11px] text-white [font-family:'DejaVu_Sans',sans-serif]">
      <div className="flex h-[70px] items-center gap-2">
        <svg viewBox="0 0 64 66" aria-hidden="true" className="h-[66px] w-16 shrink-0">
          <circle cx="32" cy="33" r="32" fill="#fff" />
          <circle cx="32" cy="33" r="28.500" fill="#ffb02e" />
          <circle cx="32" cy="21" r="20" fill="#fff7e0" />
          <circle cx="32" cy="20" r="16" fill="#f57c00" />
        </svg>
        <span className="relative text-[80px] leading-[70px] font-bold [-webkit-text-stroke:2px_white]">
          PSM
          <svg viewBox="0 0 196 70" aria-hidden="true" className="absolute left-0 top-0 h-[70px] w-[196px]">
            <path d="M0 19h30v11H0z" fill="#343434" />
            <path d="M72 50L94 22" stroke="#343434" strokeWidth="8" />
            <path d="M139 33h34v16h-34z" fill="#343434" />
            <path d="M143 49h25l-5 16h-15z" fill="#fff" />
          </svg>
        </span>
      </div>
      <div className="text-[30px] leading-[30px] font-bold uppercase whitespace-nowrap">
        <span className="text-[34px]">M</span>ech<span className="text-[34px]">D</span>esigner
      </div>
      <div className="text-[24px] leading-[32px] font-bold whitespace-nowrap uppercase">
        <span className="text-[31px]">D</span>esign <span className="text-[31px]">S</span>oftware
      </div>
    </div>
  );
}

export default function App() {
  return (
    <div className="relative flex h-screen flex-col overflow-hidden border-t border-[#5a5f5f] bg-[#3d3d3d]">
      <header className="flex h-10 shrink-0 items-start pl-[5px] text-[#cfcfcf]">
        <svg viewBox="0 0 24 24" aria-hidden="true" className="mt-1 size-6 shrink-0">
          <circle cx="11" cy="11" r="10.500" fill="#fff" />
          <circle cx="11" cy="11" r="9" fill="#f5a83c" />
          <circle cx="11" cy="8" r="6" fill="#fff" />
          <circle cx="11" cy="7" r="4" fill="#e87a10" />
          <text x="8" y="21" fontSize="12" fontWeight="700" fontFamily="Liberation Sans, sans-serif" fill="#000" stroke="#fff" strokeWidth="2" paintOrder="stroke">14</text>
        </svg>
        <nav className={`flex w-[595px] gap-[21px] pl-[11px] pt-[7px] text-[12px] leading-[18px] ${ui}`}>
          {["File", "Edit", "Add", "Run", "Filters", "View", "Help"].map((m) => (
            <button key={m} type="button">{m}</button>
          ))}
        </nav>
        <div className={`flex gap-[38px] pl-[11px] pt-[9px] text-[12px] leading-[18px] whitespace-nowrap ${mono}`}>
          <span>0 :</span>
          <span>C:\Users\Adam\Documents\My HelpAndManual</span>
        </div>
      </header>
      <div className="flex min-h-0 flex-1">
        <LeftColumn />
        <Centre />
        <RightColumn />
      </div>

      <Brand />

      <div className="absolute right-24 bottom-[33px] w-[367px] rounded-lg border-2 border-[#22928a] bg-white px-[10px] pt-[11px] pb-3 text-[31px] leading-[35px] text-[#333a45] shadow-[2px_3px_10px_rgba(0,0,0,0.4)] [font-family:'Liberation_Sans',sans-serif]">
        <p>Home the Model</p>
        <p>Add a Polyline element</p>
        <p>Add a Profile element</p>
      </div>

      <svg viewBox="0 0 12 20" aria-hidden="true" className="absolute left-[651px] top-[61px] h-5 w-3">
        <path d="M.5 .5v16l3.700-3.500 2.500 6 2.600-1.100-2.600-5.900h5z" fill="#fff" stroke="#111" strokeWidth=".8" />
      </svg>
    </div>
  );
}
